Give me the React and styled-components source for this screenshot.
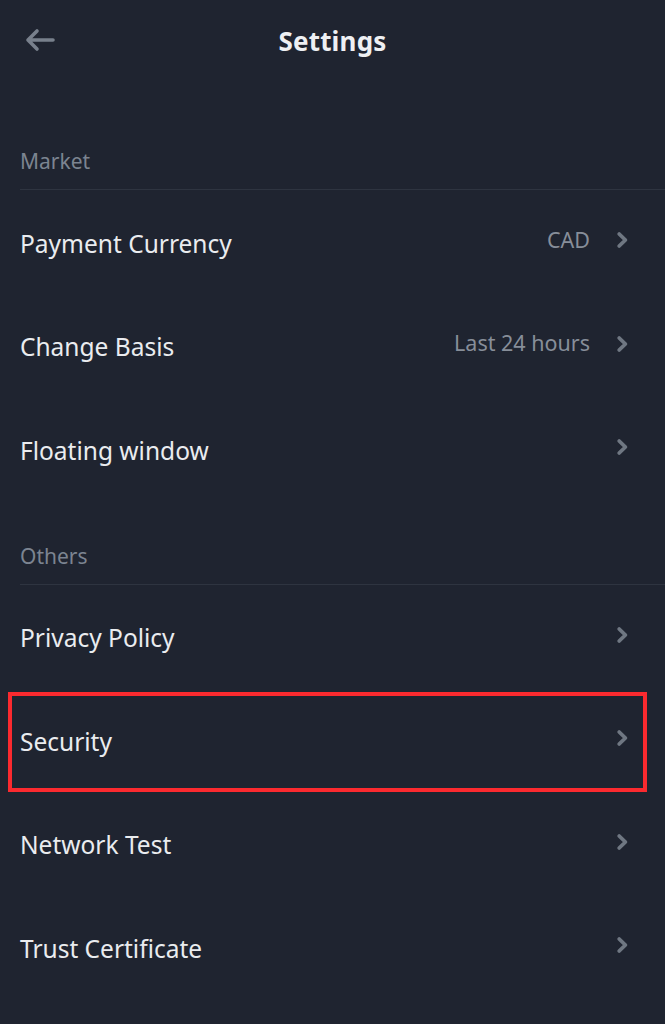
import * as React from "react"
import styled, { createGlobalStyle } from "styled-components"

const GlobalStyle = createGlobalStyle`
  html, body {
    margin: 0;
    padding: 0;
    background: #1f2430;
  }
  body {
    font-family: "Noto Sans", "Open Sans", sans-serif;
  }
`

const Screen = styled.div`
  width: 665px;
  min-height: 1024px;
  background: #1f2430;
  color: #eaecef;
  overflow: hidden;
`

const TopBar = styled.header`
  height: 82px;
  display: grid;
  grid-template-columns: 80px 1fr 80px;
  align-items: center;
`

const BackButton = styled.button`
  display: flex;
  align-items: center;
  justify-content: flex-start;
  background: transparent;
  border: none;
  padding: 0 0 0 24px;
  color: #78808c;
  cursor: pointer;
  height: 100%;
  margin-top: -2px;
`

const Title = styled.h1`
  margin: 0;
  text-align: center;
  font-size: 26px;
  font-weight: 700;
  color: #eef0f3;
  letter-spacing: 0.2px;
`

const SectionHead = styled.div`
  height: ${p => p.$height}px;
  display: flex;
  align-items: flex-end;
  margin-left: 20px;
  padding-bottom: 14px;
  box-sizing: border-box;
  border-bottom: 1px solid #2e3440;
  font-size: 21px;
  color: #7c8491;
`

const Row = styled.div`
  position: relative;
  height: 103.5px;
  display: flex;
  align-items: center;
  padding: 3px 36px 0 20px;
  box-sizing: border-box;
  cursor: pointer;

  ${p =>
    p.$marked &&
    `
    &::after {
      content: "";
      position: absolute;
      left: 8px;
      right: 18px;
      top: 4px;
      bottom: 0px;
      border: 4px solid #fb2a2f;
      pointer-events: none;
    }
  `}
`

const Label = styled.span`
  flex: 1;
  font-size: 24.5px;
  color: #eaecef;
`

const Value = styled.span`
  font-size: 21.5px;
  color: #878e99;
  margin-right: 26px;
  margin-top: -8px;
`

const Chevron = () => (
  <svg width="13" height="18" viewBox="0 0 13 18" style={{ marginTop: -6 }}>
    <path
      d="M3.2 3 L9.4 9 L3.2 15"
      fill="none"
      stroke="#6f7782"
      strokeWidth="3.8"
      strokeLinecap="round"
      strokeLinejoin="round"
    />
  </svg>
)

const BackArrow = () => (
  <svg width="32" height="24" viewBox="0 0 32 24">
    <path
      d="M29 12 H4 M13 3 L4 12 L13 21"
      fill="none"
      stroke="currentColor"
      strokeWidth="3.6"
      strokeLinecap="round"
      strokeLinejoin="round"
    />
  </svg>
)

const sections = [
  {
    title: "Market",
    height: 108,
    rows: [
      { label: "Payment Currency", value: "CAD" },
      { label: "Change Basis", value: "Last 24 hours" },
      { label: "Floating window" },
    ],
  },
  {
    title: "Others",
    height: 84,
    rows: [
      { label: "Privacy Policy" },
      { label: "Security", marked: true },
      { label: "Network Test" },
      { label: "Trust Certificate" },
    ],
  },
]

const App = () => {
  return (
    <Screen>
      <GlobalStyle />
      <TopBar>
        <BackButton aria-label="Back">
          <BackArrow />
        </BackButton>
        <Title>Settings</Title>
        <div />
      </TopBar>
      {sections.map(section => (
        <section key={section.title}>
          <SectionHead $height={section.height}>{section.title}</SectionHead>
          {section.rows.map(row => (
            <Row key={row.label} $marked={row.marked}>
              <Label>{row.label}</Label>
              {row.value ? <Value>{row.value}</Value> : null}
              <Chevron />
            </Row>
          ))}
        </section>
      ))}
    </Screen>
  )
}

export default App
